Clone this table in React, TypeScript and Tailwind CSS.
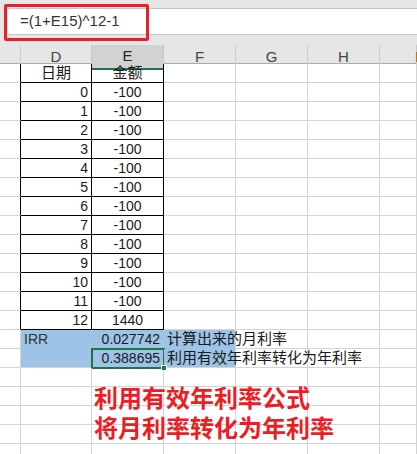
import React from 'react';

const cols = ['', 'D', 'E', 'F', 'G', 'H', 'I'];
const grid = 'grid grid-cols-[21px_71px_72px_72px_72px_72px_1fr]';

type CellProps = {
  children?: React.ReactNode;
  className?: string;
};

const Cell = ({ children, className = '' }: CellProps) => (
  <div className={`relative h-[19px] border-r border-b flex items-center whitespace-nowrap ${className}`}>
    {children}
  </div>
);

const App = () => {
  const amounts = Array.from({ length: 13 }, (_, i) => ({ day: i, amt: i === 12 ? '1440' : '-100' }));

  return (
    <div
      className="relative w-[417px] h-[454px] overflow-hidden bg-white text-[#1a1a1a]"
      style={{ fontFamily: '"Liberation Sans", "Noto Sans CJK SC", sans-serif' }}
    >
      {/* Formula bar */}
      <div className="h-[45px] bg-[#e6e6e6] pt-[8px] pl-[8px]">
        <div className="h-[27px] bg-white border-y border-[#c6c6c6] flex items-center pl-[12px] text-[15px] text-[#333]">
          =(1+E15)^12-1
        </div>
      </div>
      <div className="absolute left-[4px] top-[4px] w-[145px] h-[37px] border-[3px] border-[#e8202a] rounded-[2px]" />

      {/* Column headers */}
      <div className={`${grid} h-[19px] bg-[#e6e6e6] border-b border-[#ababab] text-[15px] text-[#444]`}>
        {cols.map((c, i) => (
          <div
            key={i}
            className={`flex items-center justify-center border-r border-[#c8c8c8] ${
              c === 'E' ? 'bg-[#d2d2d2] text-[#262626] border-b-2 border-b-[#217346]' : ''
            } ${c === 'I' ? 'justify-end pr-[2px] text-[#b86a10]' : ''}`}
          >
            {c === 'I' ? <span className="translate-x-[5px]">I</span> : c}
          </div>
        ))}
      </div>

      {/* Sheet */}
      <div className="text-[15px]">
        {/* header row of table */}
        <div className={grid}>
          <Cell className="border-r-black border-b-[#d4d4d4]" />
          <Cell className="border-black justify-center">日期</Cell>
          <Cell className="border-black justify-center">金额</Cell>
          <Cell className="border-[#d4d4d4]" />
          <Cell className="border-[#d4d4d4]" />
          <Cell className="border-[#d4d4d4]" />
          <Cell className="border-[#d4d4d4]" />
        </div>
        {amounts.map((r) => (
          <div key={r.day} className={grid}>
            <Cell className="border-r-black border-b-[#d4d4d4]" />
            <Cell className="border-black justify-end pr-[3px] text-[14px]">{r.day}</Cell>
            <Cell className="border-black justify-center text-[14px]">{r.amt}</Cell>
            <Cell className="border-[#d4d4d4]" />
            <Cell className="border-[#d4d4d4]" />
            <Cell className="border-[#d4d4d4]" />
            <Cell className="border-[#d4d4d4]" />
          </div>
        ))}

        {/* IRR rows (selected) */}
        <div className={grid}>
          <Cell className="border-[#d4d4d4]" />
          <Cell className="bg-[#9dc3e6] border-[#9dc3e6] pl-[3px] text-[14px] text-[#333]">IRR</Cell>
          <Cell className="bg-[#9dc3e6] border-[#9dc3e6] justify-end pr-[3px] text-[14px]">0.027742</Cell>
          <Cell className="bg-[#9dc3e6] border-r-[#d4d4d4] border-b-[#9dc3e6] pl-[3px] overflow-visible">
            <span className="relative z-10">计算出来的月利率</span>
          </Cell>
          <Cell className="border-[#d4d4d4]" />
          <Cell className="border-[#d4d4d4]" />
          <Cell className="border-[#d4d4d4]" />
        </div>
        <div className={grid}>
          <Cell className="border-[#d4d4d4]" />
          <Cell className="bg-[#9dc3e6] border-r-[#9dc3e6] border-b-[#d4d4d4]" />
          <Cell className="bg-[#9dc3e6] border-r-[#9dc3e6] border-b-[#d4d4d4] justify-end pr-[3px] text-[14px]">
            0.388695
            <div className="absolute -left-px -top-px w-[74px] h-[21px] border-2 border-[#217346]" />
            <div className="absolute right-[-4px] bottom-[-4px] w-[6px] h-[6px] bg-[#217346] border border-white z-10" />
          </Cell>
          <Cell className="bg-[#9dc3e6] border-[#d4d4d4] pl-[3px] overflow-visible">
            <span className="relative z-10">利用有效年利率转化为年利率</span>
          </Cell>
          <Cell className="border-[#d4d4d4]" />
          <Cell className="border-[#d4d4d4]" />
          <Cell className="border-[#d4d4d4]" />
        </div>

        {Array.from({ length: 5 }, (_, i) => (
          <div key={i} className={grid}>
            {cols.map((c, j) => (
              <Cell key={j} className="border-[#d4d4d4]" />
            ))}
          </div>
        ))}
      </div>

      {/* Annotation text box */}
      <div className="absolute left-[94px] top-[384px] text-[24px] leading-[30px] font-bold text-[#ee1c25]">
        <div>利用有效年利率公式</div>
        <div>将月利率转化为年利率</div>
      </div>
    </div>
  );
};

export default App;
